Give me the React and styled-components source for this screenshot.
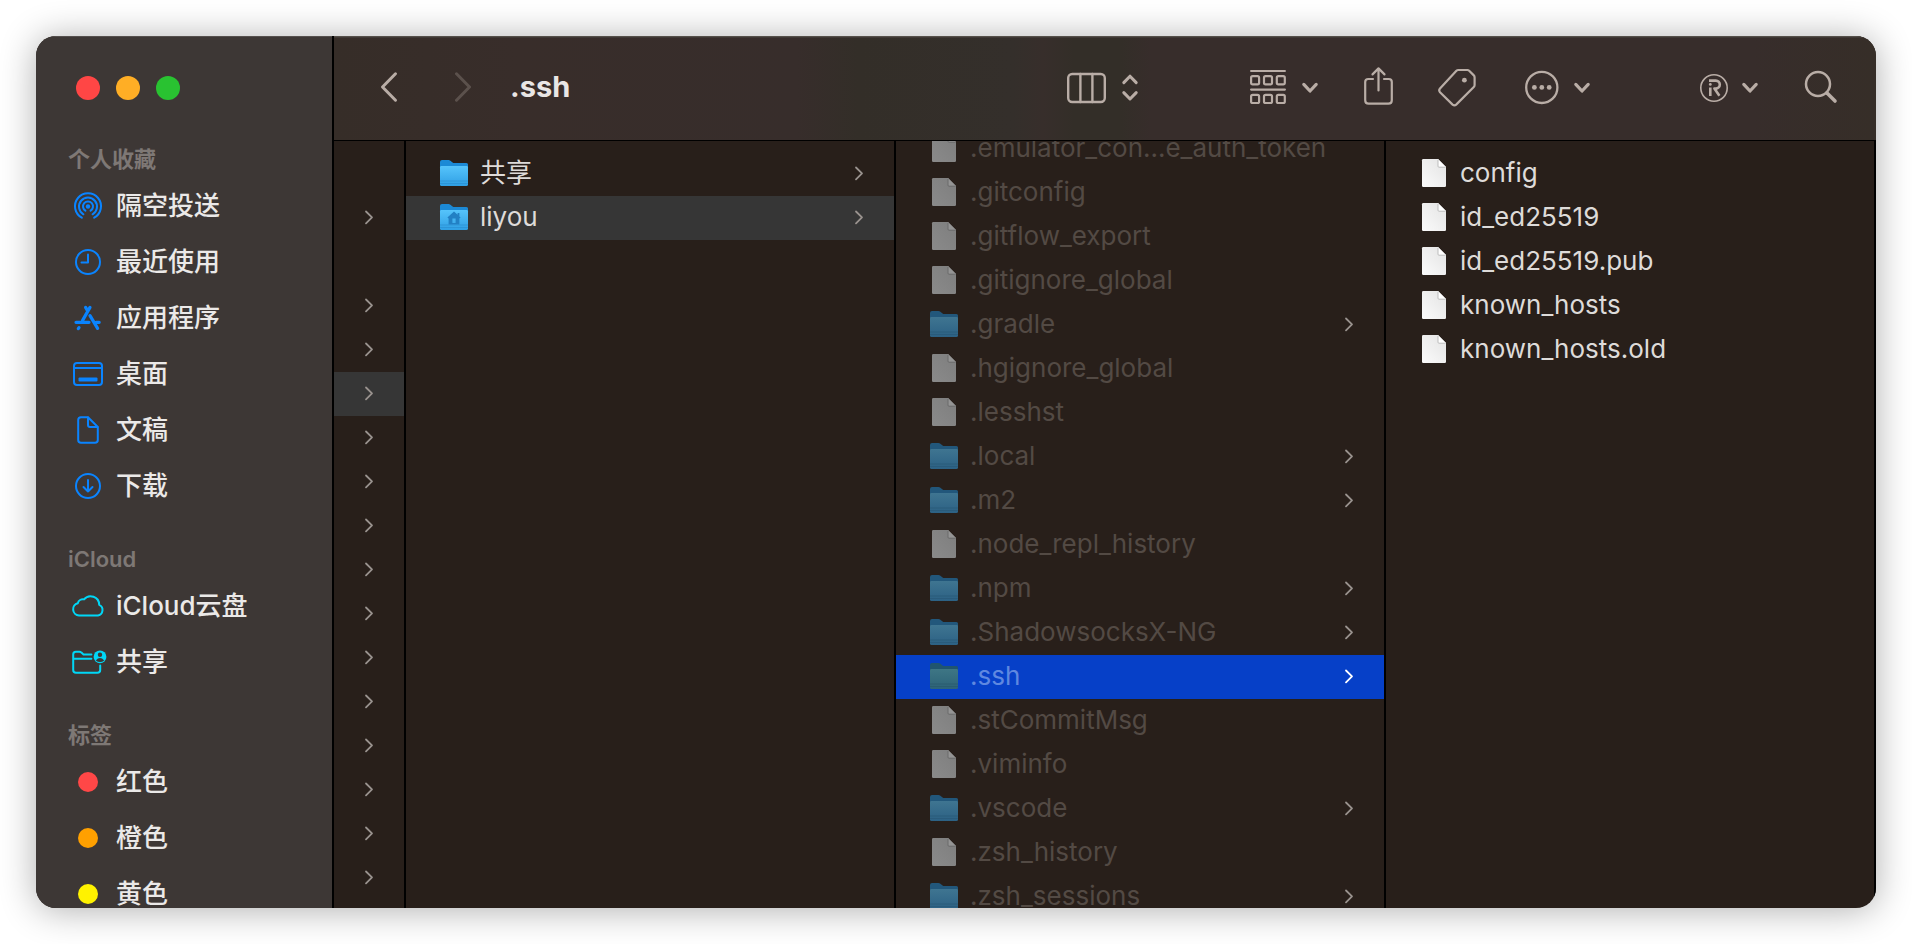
import React from 'react';
import styled, { createGlobalStyle, css } from 'styled-components';

const Global = createGlobalStyle`
  *, *::before, *::after { box-sizing: border-box; }
  body { margin: 0; background: #ffffff; }
  button { font: inherit; color: inherit; background: none; border: 0; padding: 0; margin: 0; text-align: left; cursor: default; }
  ul { list-style: none; margin: 0; padding: 0; }
  svg { display: block; flex: none; overflow: visible; }
`;

const Desktop = styled.div`
  height: 100vh;
  padding: 36px;
  font-family: Inter, "Noto Sans CJK SC", sans-serif;
  font-size: 26px;
  line-height: 32px;
`;

const Window = styled.div`
  display: flex;
  height: 100%;
  border-radius: 20px;
  overflow: hidden;
  background: #281f1a;
  box-shadow: 0 2px 36px rgba(0, 0, 0, 0.32);
`;

const Sidebar = styled.aside`
  flex: none;
  width: 298px;
  overflow: hidden;
  background: #3d3735;
  border-right: 2px solid #000000;
  box-shadow: inset 0 1px 0 #55504e;
  color: #ebe9e8;
`;

const TrafficLights = styled.div`
  display: flex;
  align-items: center;
  gap: 16px;
  height: 104px;
  padding-left: 40px;
`;

const Light = styled.button`
  width: 24px;
  height: 24px;
  border-radius: 50%;
  background: ${(p) => p.$color};
`;

const Section = styled.section`
  margin-bottom: 26px;
`;

const SectionTitle = styled.h2`
  margin: 0;
  padding-left: 32px;
  font-size: 22px;
  font-weight: 600;
  line-height: 38px;
  color: #7e7875;
`;

const SideLink = styled.a`
  display: flex;
  align-items: center;
  height: 56px;
  padding-left: 32px;
  color: inherit;
  font-size: 26px;
  font-weight: 500;
  text-decoration: none;
  white-space: nowrap;
`;

const SideIcon = styled.span`
  display: flex;
  align-items: center;
  justify-content: center;
  width: 40px;
  margin-right: 8px;
  color: ${(p) => p.$color};
`;

const TagDot = styled.span`
  width: 20px;
  height: 20px;
  border-radius: 50%;
  background: ${(p) => p.$color};
`;

const Main = styled.main`
  flex: 1;
  min-width: 0;
  display: flex;
  flex-direction: column;
`;

const Toolbar = styled.header`
  flex: none;
  display: flex;
  align-items: center;
  height: 105px;
  padding: 0 38px 2px 44px;
  border-bottom: 1px solid #000000;
  background: linear-gradient(90deg, #362d28 0%, #382d2a 12%, #372d2b 30%, #332e28 34%, #342f2b 44%, #372e2b 46%, #332e28 48%, #332e28 51%, #372d2b 53%, #372d2b 92%, #362e28 100%);
  box-shadow: inset 0 1px 0 #55504a, inset 0 2px 0 #403935;
  color: #b9ada6;
`;

const NavButtons = styled.div`
  display: flex;
  gap: 56px;
`;

const ToolButton = styled.button`
  display: flex;
  align-items: center;
  gap: 14px;
  opacity: ${(p) => (p.disabled ? 0.28 : 1)};
`;

const Title = styled.h1`
  flex: 1;
  margin: 0 0 0 36px;
  font-size: 29px;
  font-weight: 700;
  line-height: 36px;
  color: #e9e6e5;
`;

const Tools = styled.div`
  display: flex;
  align-items: center;
  gap: 110px;
`;

const ToolGroup = styled.div`
  display: flex;
  align-items: center;
  gap: 46px;
`;

const Columns = styled.div`
  flex: 1;
  min-height: 0;
  display: flex;
`;

const Column = styled.div`
  flex: ${(p) => (p.$narrow ? '0 0 72px' : '1 1 0')};
  min-width: 0;
  overflow: hidden;
  border-right: 2px solid #000000;
`;

const Entries = styled.ul`
  && { margin-top: ${(p) => (p.$scrolled ? '-14px' : '11px')}; }
`;

const rowTones = {
  none: css`background: transparent;`,
  muted: css`background: #363636;`,
  active: css`background: #0640c8;`,
};

const Row = styled.button`
  && {
    display: flex;
    align-items: center;
    width: 100%;
    height: 44px;
    padding: ${(p) => (p.$narrow ? '0 30px 2px' : '0 30px 2px 34px')};
    color: ${(p) => (p.$active ? '#5f88e0' : p.$dim ? '#534a44' : '#dedbd9')};
    ${(p) => rowTones[p.$tone || 'none']}
  }
`;

const RowIcon = styled.span`
  display: flex;
  justify-content: center;
  flex: none;
  width: 28px;
  margin-right: 12px;
`;

const RowName = styled.span`
  flex: 1;
  min-width: 0;
  overflow: hidden;
  white-space: nowrap;
`;

const RowChevron = styled.span`
  flex: none;
  margin-left: auto;
  color: ${(p) => (p.$active ? '#ffffff' : '#99928e')};
`;

const Chevron = () => (
  <svg width="10" height="14" viewBox="0 0 10 14" fill="none" stroke="currentColor" strokeWidth="1.8" strokeLinecap="round" strokeLinejoin="round">
    <path d="M2 1.5 8 7.4 2 13.3" />
  </svg>
);

const folderColors = {
  normal: { back: '#1c8ad6', top: '#56c4fb', bottom: '#2f9fe4', stripe: '#2a8fd2' },
  dim: { back: '#22577b', top: '#3f7591', bottom: '#2c6184', stripe: '#285877' },
  active: { back: '#20556f', top: '#3e7685', bottom: '#2d6377', stripe: '#28596c' },
};

const Folder = ({ home, look = 'normal' }) => {
  const c = folderColors[look];
  const id = `folder-${look}`;
  return (
    <svg width="28" height="28" viewBox="0 0 28 28">
      <defs>
        <linearGradient id={id} x1="0" y1="0" x2="0" y2="1">
          <stop offset="0" stopColor={c.top} />
          <stop offset="1" stopColor={c.bottom} />
        </linearGradient>
      </defs>
      <path d="M0 3Q0 1 2 1H8.5Q9.6 1 10.4 1.8L12.6 3.4Q13.2 4 14.4 4H26.5Q28 4 28 5.5V10H0Z" fill={c.back} />
      <path d="M0 8.4Q0 7 1.4 7H26.6Q28 7 28 8.4V25.4Q28 27 26.4 27H1.6Q0 27 0 25.4Z" fill={`url(#${id})`} />
      <path d="M0 22H28M0 24.5H28" stroke={c.stripe} strokeWidth="1" opacity=".7" />
      {home && <path d="M14 8.5 7.4 14.6 8.6 15.6V21.5H19.4V15.6L20.6 14.6 19.4 13.5V10H17.6V11.8ZM12.4 20V15.5H15.6V20Z" fill="#2280c4" fillRule="evenodd" />}
    </svg>
  );
};

const fileColors = {
  normal: { top: '#e3e3e3', bottom: '#fbfbfb', fold: '#ffffff', edge: '#bdbdbd' },
  dim: { top: '#7e7e7e', bottom: '#8a8a8a', fold: '#949494', edge: '#6a6a6a' },
};

const File = ({ look = 'normal' }) => {
  const c = fileColors[look];
  const id = `file-${look}`;
  return (
    <svg width="24" height="28" viewBox="0 0 24 28">
      <defs>
        <linearGradient id={id} x1="1" y1="0" x2="0" y2="1">
          <stop offset="0" stopColor={c.top} />
          <stop offset="1" stopColor={c.bottom} />
        </linearGradient>
      </defs>
      <path d="M0 1.2Q0 0 1.2 0H16L24 8V26.8Q24 28 22.8 28H1.2Q0 28 0 26.8Z" fill={`url(#${id})`} />
      <path d="M16 0V7Q16 8 17 8H24Z" fill={c.fold} />
      <path d="M16 1V7.2Q16 8.2 17 8.2H23.5" fill="none" stroke={c.edge} strokeWidth="1" />
    </svg>
  );
};

const line = { fill: 'none', stroke: 'currentColor', strokeLinecap: 'round', strokeLinejoin: 'round' };

const AirDrop = () => (
  <svg width="28" height="28" viewBox="0 0 28 28" {...line} strokeWidth="2">
    <circle cx="14" cy="14.5" r="2.2" fill="currentColor" stroke="none" />
    <path d="M11.4 18.7A5 5 0 1 1 16.6 18.7" />
    <path d="M9.4 22.3A9 9 0 1 1 18.6 22.3" />
    <path d="M7.8 25.7A13 13 0 1 1 20.2 25.7" />
  </svg>
);
const Clock = () => (
  <svg width="28" height="28" viewBox="0 0 28 28" {...line} strokeWidth="2">
    <circle cx="14" cy="14" r="12" />
    <path d="M14 6.5V14.5H7.5" />
  </svg>
);
const Apps = () => (
  <svg width="28" height="28" viewBox="0 0 28 28" {...line} strokeWidth="3.2">
    <path d="M11.6 3.4 13.5 6.6M16 3.4 8.6 16.4M2 18.3H15M5 23.6 4.3 24.6M16 11.6 23.6 24.4M22 18.3H25.2" />
  </svg>
);
const DesktopIcon = () => (
  <svg width="30" height="24" viewBox="0 0 30 24" {...line} strokeWidth="2">
    <rect x="1" y="1" width="28" height="22" rx="3" />
    <path d="M1 6H29" />
    <rect x="5.5" y="15.5" width="19" height="4" rx="1" fill="currentColor" stroke="none" />
  </svg>
);
const Doc = () => (
  <svg width="22" height="28" viewBox="0 0 22 28" {...line} strokeWidth="2">
    <path d="M4 1.2H11L20.8 11V24Q20.8 26.8 18 26.8H4Q1.2 26.8 1.2 24V4Q1.2 1.2 4 1.2Z" />
    <path d="M11 1.5V9Q11 11 13 11H20.5" />
  </svg>
);
const Download = () => (
  <svg width="28" height="28" viewBox="0 0 28 28" {...line} strokeWidth="2">
    <circle cx="14" cy="14" r="12" />
    <path d="M14 8V19.5M9.5 15 14 19.5 18.5 15" />
  </svg>
);
const Cloud = () => (
  <svg width="32" height="24" viewBox="0 0 32 24" {...line} strokeWidth="2">
    <path d="M7 21.4A6.2 6.2 0 0 1 5.8 9.2 5.2 5.2 0 0 1 12 5.4 8.6 8.6 0 0 1 27.2 10.8 5.6 5.6 0 0 1 26 21.4Z" />
  </svg>
);
const SharedFolder = () => (
  <svg width="32" height="24" viewBox="0 0 32 24" {...line} strokeWidth="2">
    <path d="M19.4 4.5H11.5L9.4 2.6Q8.6 1.8 7.4 1.8H3.8Q1.2 1.8 1.2 4.4V20Q1.2 22.8 4 22.8H25.4Q28.2 22.8 28.2 20V15.6M1.2 8.8H19.4" />
    <circle cx="28" cy="6.8" r="6.4" fill="currentColor" stroke="none" />
    <circle cx="28" cy="4.8" r="2.2" fill="#3d3735" stroke="none" />
    <path d="M23.8 10.4Q28 5.8 32.2 10.4 28 13.4 23.8 10.4Z" fill="#3d3735" stroke="none" />
  </svg>
);

const Back = () => (
  <svg width="20" height="32" viewBox="0 0 20 32" {...line} strokeWidth="3">
    <path d="M17.5 2.8 4.5 16 17.5 29.2" />
  </svg>
);
const Forward = () => (
  <svg width="20" height="32" viewBox="0 0 20 32" {...line} strokeWidth="3">
    <path d="M2.5 2.8 15.5 16 2.5 29.2" />
  </svg>
);
const Down = () => (
  <svg width="16" height="12" viewBox="0 0 16 12" {...line} strokeWidth="3.2">
    <path d="M1.8 3.4 8 10 14.2 3.4" />
  </svg>
);
const UpDown = () => (
  <svg width="18" height="28" viewBox="0 0 18 28" {...line} strokeWidth="3">
    <path d="M1.8 9.6 8 3.2 14.2 9.6M1.8 19.6 8 26 14.2 19.6" />
  </svg>
);
const ColumnsIcon = () => (
  <svg width="42" height="32" viewBox="0 0 42 32" {...line} strokeWidth="2.4">
    <rect x="2.2" y="3" width="36.6" height="28" rx="4" />
    <path d="M14.4 3V31M26.4 3V31" />
  </svg>
);
const GroupIcon = () => (
  <svg width="38" height="36" viewBox="0 0 38 36" {...line} strokeWidth="2.2">
    <path d="M1.1 2H34.9M1.1 20.6H34.9" />
    {[7.2, 25.8].map((y) => [1.1, 14, 26.8].map((x) => <rect key={`${x}-${y}`} x={x} y={y} width="8" height="8.2" rx="1.6" />))}
  </svg>
);
const Share = () => (
  <svg width="28" height="40" viewBox="0 0 28 40" {...line} strokeWidth="2.2">
    <path d="M9 12H4.2Q1.2 12 1.2 15V33.2Q1.2 36.6 4.6 36.6H24.4Q27.8 36.6 27.8 33.2V15Q27.8 12 24.8 12H20" />
    <path d="M14.5 23.5V1.4M8.5 7.4 14.5 1.4 20.5 7.4" />
  </svg>
);
const Tag = () => (
  <svg width="40" height="40" viewBox="0 0 40 40" {...line} strokeWidth="2.2">
    <path d="M20.2 3H29.4Q30.4 3 31.2 3.8L35.8 8.4Q36.6 9.2 36.6 10.4V18Q36.6 19.2 35.8 20L18.2 37.6Q16.4 39.2 14.6 37.6L2 25.2Q.4 23.4 2 21.6L18.4 3.8Q19.2 3 20.2 3Z" />
    <circle cx="26.4" cy="13.2" r="2.4" fill="currentColor" stroke="none" />
  </svg>
);
const More = () => (
  <svg width="36" height="36" viewBox="0 0 36 36" {...line} strokeWidth="2.3">
    <circle cx="17.8" cy="18.4" r="15.6" />
    {[10.4, 17.8, 25.2].map((x) => <circle key={x} cx={x} cy="18.4" r="2.4" fill="currentColor" stroke="none" />)}
  </svg>
);
const Monogram = () => (
  <svg width="28" height="28" viewBox="0 0 28 28" {...line} strokeWidth="1.6">
    <circle cx="14" cy="15" r="13.2" />
    <path d="M9 7.6H15.8A4 4 0 0 1 15.8 15.6H14.4L19.4 22.8M10.3 14.4V23" strokeWidth="2.6" strokeLinecap="butt" />
    <circle cx="10.3" cy="11.4" r="1.4" fill="currentColor" stroke="none" />
  </svg>
);
const Search = () => (
  <svg width="34" height="34" viewBox="0 0 34 34" {...line} strokeWidth="2.5">
    <circle cx="14" cy="14" r="12" />
    <path d="M23 23 31 31" strokeWidth="3.6" />
  </svg>
);

const blue = '#0a84ff';
const cyan = '#00d7f7';

const sections = [
  {
    title: '个人收藏',
    items: [
      ['隔空投送', <AirDrop />, blue],
      ['最近使用', <Clock />, blue],
      ['应用程序', <Apps />, blue],
      ['桌面', <DesktopIcon />, blue],
      ['文稿', <Doc />, blue],
      ['下载', <Download />, blue],
    ],
  },
  {
    title: 'iCloud',
    items: [
      ['iCloud云盘', <Cloud />, cyan],
      ['共享', <SharedFolder />, cyan],
    ],
  },
  {
    title: '标签',
    items: [
      ['红色', <TagDot $color="#ff4747" />],
      ['橙色', <TagDot $color="#ffa000" />],
      ['黄色', <TagDot $color="#fff200" />],
    ],
  },
];

const rootRows = ['', 'chevron', '', 'chevron', 'chevron', 'selected', ...Array(11).fill('chevron')];

const homeRows = [
  ['.emulator_con...e_auth_token'],
  ['.gitconfig'],
  ['.gitflow_export'],
  ['.gitignore_global'],
  ['.gradle', true],
  ['.hgignore_global'],
  ['.lesshst'],
  ['.local', true],
  ['.m2', true],
  ['.node_repl_history'],
  ['.npm', true],
  ['.ShadowsocksX-NG', true],
  ['.ssh', true],
  ['.stCommitMsg'],
  ['.viminfo'],
  ['.vscode', true],
  ['.zsh_history'],
  ['.zsh_sessions', true],
];

const sshRows = ['config', 'id_ed25519', 'id_ed25519.pub', 'known_hosts', 'known_hosts.old'];

const Entry = ({ name, folder, home, dim, tone }) => {
  const active = tone === 'active';
  const look = active ? 'active' : dim ? 'dim' : 'normal';
  return (
    <li>
      <Row $tone={tone} $dim={dim} $active={active}>
        <RowIcon>{folder ? <Folder home={home} look={look} /> : <File look={look} />}</RowIcon>
        <RowName>{name}</RowName>
        {folder && <RowChevron $active={active}><Chevron /></RowChevron>}
      </Row>
    </li>
  );
};

export default function App() {
  return (
    <Desktop>
      <Global />
      <Window>
        <Sidebar>
          <TrafficLights>
            <Light $color="#ff4645" aria-label="关闭" />
            <Light $color="#ffae25" aria-label="最小化" />
            <Light $color="#29c231" aria-label="缩放" />
          </TrafficLights>
          <nav>
            {sections.map((s) => (
              <Section key={s.title}>
                <SectionTitle>{s.title}</SectionTitle>
                {s.items.map(([label, icon, color]) => (
                  <SideLink key={label} href="#">
                    <SideIcon $color={color}>{icon}</SideIcon>
                    {label}
                  </SideLink>
                ))}
              </Section>
            ))}
          </nav>
        </Sidebar>
        <Main>
          <Toolbar>
            <NavButtons>
              <ToolButton aria-label="后退"><Back /></ToolButton>
              <ToolButton aria-label="前进" disabled><Forward /></ToolButton>
            </NavButtons>
            <Title>.ssh</Title>
            <Tools>
              <ToolGroup>
                <ToolButton aria-label="显示方式"><ColumnsIcon /><UpDown /></ToolButton>
              </ToolGroup>
              <ToolGroup>
                <ToolButton aria-label="分组"><GroupIcon /><Down /></ToolButton>
                <ToolButton aria-label="共享"><Share /></ToolButton>
                <ToolButton aria-label="标签"><Tag /></ToolButton>
                <ToolButton aria-label="更多"><More /><Down /></ToolButton>
              </ToolGroup>
              <ToolGroup>
                <ToolButton aria-label="扩展"><Monogram /><Down /></ToolButton>
                <ToolButton aria-label="搜索"><Search /></ToolButton>
              </ToolGroup>
            </Tools>
          </Toolbar>
          <Columns>
            <Column $narrow>
              <Entries>
                {rootRows.map((kind, i) => (
                  <li key={i}>
                    <Row $narrow $tone={kind === 'selected' ? 'muted' : 'none'} aria-label="文件夹">
                      {kind && <RowChevron><Chevron /></RowChevron>}
                    </Row>
                  </li>
                ))}
              </Entries>
            </Column>
            <Column>
              <Entries>
                <Entry name="共享" folder />
                <Entry name="liyou" folder home tone="muted" />
              </Entries>
            </Column>
            <Column>
              <Entries $scrolled>
                {homeRows.map(([name, folder]) => (
                  <Entry key={name} name={name} folder={folder} dim tone={name === '.ssh' ? 'active' : 'none'} />
                ))}
              </Entries>
            </Column>
            <Column>
              <Entries>
                {sshRows.map((name) => <Entry key={name} name={name} />)}
              </Entries>
            </Column>
          </Columns>
        </Main>
      </Window>
    </Desktop>
  );
}
